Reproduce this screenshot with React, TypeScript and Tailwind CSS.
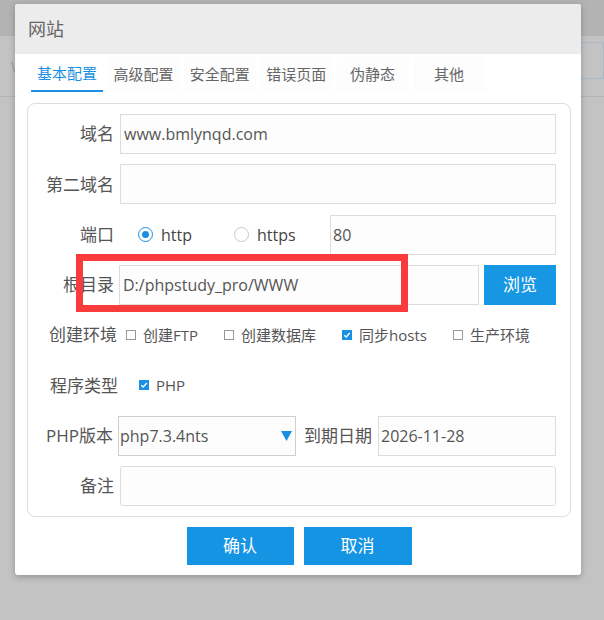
import React from "react";

const font = { fontFamily: '"Open Sans", "Noto Sans CJK SC", sans-serif' };

const tabs = ["基本配置", "高级配置", "安全配置", "错误页面", "伪静态", "其他"];

function Label({ children, w = "w-[86px]" }: { children: React.ReactNode; w?: string }) {
  return <div className={`${w} shrink-0 text-right text-[17px] text-[#555]`}>{children}</div>;
}

function Box({ checked, label }: { checked?: boolean; label: string }) {
  return (
    <div className="flex items-center gap-[7px]">
      {checked ? (
        <span className="flex h-[10px] w-[10px] items-center justify-center bg-[#1a8fe3]">
          <svg width="8" height="8" viewBox="0 0 8 8">
            <path d="M1.3 4.2 L3.2 6 L6.8 2" stroke="#fff" strokeWidth="1.3" fill="none" />
          </svg>
        </span>
      ) : (
        <span className="h-[10px] w-[10px] border border-[#9a9a9a] bg-white" />
      )}
      <span className="text-[15px] text-[#555]">{label}</span>
    </div>
  );
}

export default function App() {
  return (
    <div className="relative h-[620px] w-[604px] overflow-hidden bg-[#c3c3c3]" style={font}>
      {/* page behind the overlay */}
      <div className="h-[36px] bg-[#b3b3b3]" />
      <div className="flex h-[61px] items-center border-b border-[#b4b4b4] pl-[11px]">
        <span className="text-[14px] text-[#9aa0a6]">W</span>
        <div className="ml-auto mt-[-12px] h-[37px] w-[30px] border border-[#a9b9c8]" />
      </div>

      {/* dialog */}
      <div className="absolute left-[15px] top-[4px] flex h-[571px] w-[566px] flex-col rounded-[3px] bg-white shadow-[0_2px_6px_rgba(0,0,0,0.25)]">
        <div className="flex h-[50px] items-center rounded-t-[3px] bg-[#ececec] pl-[13px] text-[18px] text-[#666]">网站</div>

        <div className="mt-[3px] flex h-[35px] gap-[4.4px] pl-[16px]">
          {tabs.map((t, i) => (
            <div
              key={t}
              className={`flex w-[72px] items-center justify-center text-[15px] ${
                i === 0 ? "border-b-2 border-[#1a8fe3] text-[#1a8fe3]" : "bg-[#fdfdfd] text-[#666]"
              }`}
            >
              {t}
            </div>
          ))}
        </div>

        <div className="ml-[12px] mt-[11px] flex h-[414px] w-[544px] flex-col gap-[10.3px] rounded-[8px] border border-[#dddddd] pb-[10px] pr-[14px] pt-[10px]">
          <div className="flex h-[40px] items-center">
            <Label>域名</Label>
            <div className="ml-[6px] flex h-full flex-1 items-center border border-[#dcdcdc] bg-[#fdfdfd] pl-[3px] text-[16px] text-[#555]">
              www.bmlynqd.com
            </div>
          </div>

          <div className="flex h-[40px] items-center">
            <Label>第二域名</Label>
            <div className="ml-[6px] h-full flex-1 border border-[#dcdcdc] bg-[#fdfdfd]" />
          </div>

          <div className="flex h-[40px] items-center">
            <Label>端口</Label>
            <div className="ml-[24px] flex items-center gap-[8px]">
              <span className="flex h-[15px] w-[15px] items-center justify-center rounded-full border border-[#1a8fe3] bg-white">
                <span className="h-[7px] w-[7px] rounded-full bg-[#1a8fe3]" />
              </span>
              <span className="text-[16px] text-[#444]">http</span>
            </div>
            <div className="ml-[42px] flex items-center gap-[8px]">
              <span className="h-[15px] w-[15px] rounded-full border border-[#c8c8c8] bg-white" />
              <span className="text-[16px] text-[#444]">https</span>
            </div>
            <div className="ml-auto flex h-full w-[226px] items-center border border-[#dcdcdc] bg-[#fdfdfd] pl-[2px] text-[16px] text-[#555]">
              80
            </div>
          </div>

          <div className="flex h-[40px] items-center">
            <Label>根目录</Label>
            <div className="ml-[5px] flex h-full flex-1 items-center border border-[#dcdcdc] bg-[#fdfdfd] pl-[3px] text-[16px] text-[#555]">
              D:/phpstudy_pro/WWW
            </div>
            <div className="ml-[5px] flex h-full w-[72px] items-center justify-center bg-[#1796e4] text-[17px] text-white">
              浏览
            </div>
          </div>

          <div className="flex h-[40px] items-center">
            <Label w="w-[89px]">创建环境</Label>
            <div className="ml-[9px] flex items-center gap-[26px]">
              <Box label="创建FTP" />
              <Box label="创建数据库" />
              <Box checked label="同步hosts" />
              <Box label="生产环境" />
            </div>
          </div>

          <div className="flex h-[40px] items-center">
            <Label w="w-[90px]">程序类型</Label>
            <div className="ml-[21px]">
              <Box checked label="PHP" />
            </div>
          </div>

          <div className="flex h-[40px] items-center">
            <Label w="w-[85px]">PHP版本</Label>
            <div className="ml-[5px] flex h-full w-[178px] items-center border border-[#cfcfcf] bg-[#fdfdfd] pl-[1px] pr-[3px] text-[16px] text-[#555]">
              <span className="flex-1">php7.3.4nts</span>
              <svg width="11" height="11" viewBox="0 0 11 11">
                <path d="M0 1 L11 1 L5.5 11 Z" fill="#1a8fe3" />
              </svg>
            </div>
            <span className="ml-[8px] text-[17px] text-[#555]">到期日期</span>
            <div className="ml-auto flex h-full w-[178px] items-center border border-[#dcdcdc] bg-[#fdfdfd] pl-[2px] text-[16px] text-[#555]">
              2026-11-28
            </div>
          </div>

          <div className="flex h-[40px] items-center">
            <Label>备注</Label>
            <div className="ml-[6px] h-full flex-1 rounded-[3px] border border-[#dcdcdc] bg-[#fdfdfd]" />
          </div>
        </div>

        <div className="mt-[10px] flex justify-center gap-[10px] pl-[2px]">
          <div className="flex h-[38px] w-[107px] items-center justify-center bg-[#1594e4] text-[17px] text-white">确认</div>
          <div className="flex h-[38px] w-[108px] items-center justify-center bg-[#1594e4] text-[17px] text-white">取消</div>
        </div>

        {/* red annotation frame */}
        <div className="absolute left-[61px] top-[250px] h-[58px] w-[332px] border-[7px] border-[#fa3b3b]" />
      </div>
    </div>
  );
}
